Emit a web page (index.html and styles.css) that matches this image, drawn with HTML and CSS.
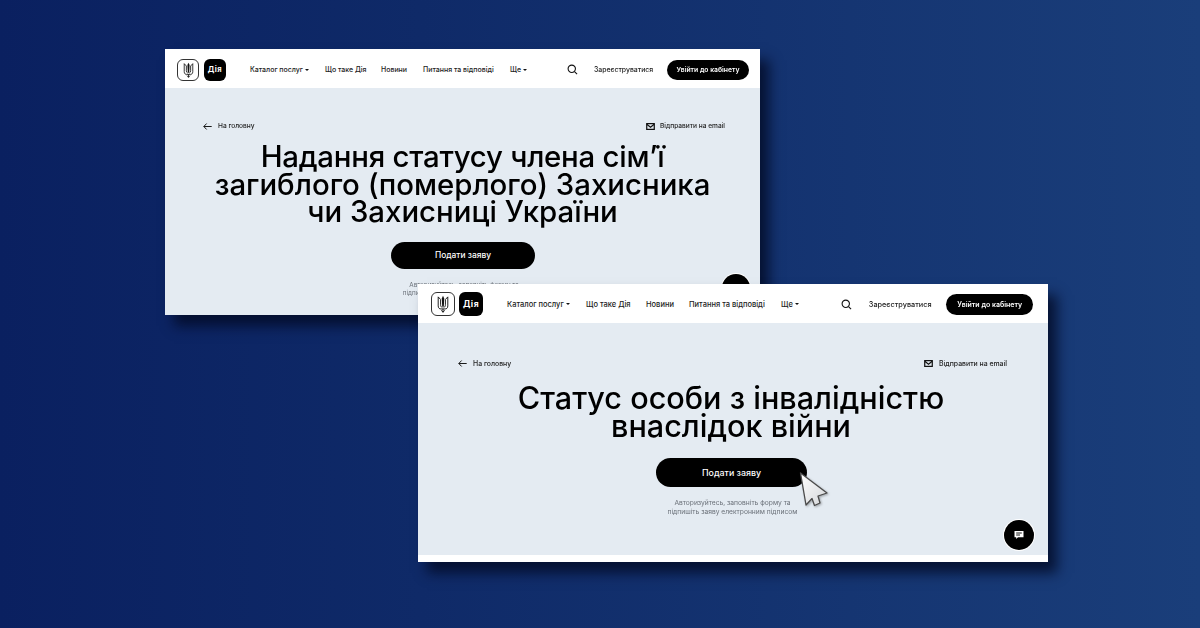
FILE: index.html
```html
<!DOCTYPE html>
<html lang="uk">
<head>
<meta charset="utf-8">
<title>Дія</title>
<link rel="stylesheet" href="styles.css">
</head>
<body>
<svg class="defs" width="0" height="0" aria-hidden="true">
  <symbol id="trident" viewBox="0 0 16 24">
    <path d="M8 1 L9.6 4.5 L9.1 14.5 L8 17 L6.9 14.5 L6.4 4.5 Z" fill="#111"/>
    <path d="M1.6 2.5 V14.5 C1.6 17.5 3.2 18.6 5.2 18.6 H10.8 C12.8 18.6 14.4 17.5 14.4 14.5 V2.5 L11.2 6 V13 C11.2 15 10.4 16 9 16.8 M1.6 2.5 L4.8 6 V13 C4.8 15 5.6 16 7 16.8 M8 18.6 V23 M5.8 20.4 L8 23 L10.2 20.4" fill="none" stroke="#111" stroke-width="1.25"/>
  </symbol>
</svg>

<section class="window window-a">
  <header class="topbar">
    <div class="logos">
      <span class="logo logo-gov"><svg class="trident"><use href="#trident"/></svg></span>
      <span class="logo logo-diia">Дія</span>
    </div>
    <nav class="nav">
      <a class="nav-catalog">Каталог послуг<i class="caret"></i></a>
      <a class="nav-what">Що таке Дія</a>
      <a class="nav-news">Новини</a>
      <a class="nav-faq">Питання та відповіді</a>
      <a class="nav-more">Ще<i class="caret"></i></a>
    </nav>
    <svg class="search" viewBox="0 0 12 12"><circle cx="5.2" cy="5.2" r="4" /><path d="M8.2 8.2 L11 11"/></svg>
    <a class="register">Зареєструватися</a>
    <a class="login">Увійти до кабінету</a>
  </header>
  <main class="content">
    <div class="toolbar">
      <a class="back"><svg class="arrow" viewBox="0 0 10 8"><path d="M4 .6 L.8 4 L4 7.4 M.8 4 H9.8"/></svg>На головну</a>
      <a class="mail"><svg class="envelope" viewBox="0 0 10 8"><rect x=".7" y=".7" width="8.6" height="6.6"/><path d="M.8 1.4 L5 4.8 L9.2 1.4"/></svg>Відправити на email</a>
    </div>
    <h1 class="title"><span class="title-tight">Надання статусу члена сім’ї</span><br>загиблого (померлого) Захисника<br>чи Захисниці України</h1>
    <a class="apply">Подати заяву</a>
    <p class="hint">Авторизуйтесь, заповніть форму та<br>підпишіть заяву електронним підписом</p>
  </main>
  <span class="chat"></span>
</section>

<section class="window window-b">
  <header class="topbar">
    <div class="logos">
      <span class="logo logo-gov"><svg class="trident"><use href="#trident"/></svg></span>
      <span class="logo logo-diia">Дія</span>
    </div>
    <nav class="nav">
      <a class="nav-catalog">Каталог послуг<i class="caret"></i></a>
      <a class="nav-what">Що таке Дія</a>
      <a class="nav-news">Новини</a>
      <a class="nav-faq">Питання та відповіді</a>
      <a class="nav-more">Ще<i class="caret"></i></a>
    </nav>
    <svg class="search" viewBox="0 0 12 12"><circle cx="5.2" cy="5.2" r="4" /><path d="M8.2 8.2 L11 11"/></svg>
    <a class="register">Зареєструватися</a>
    <a class="login">Увійти до кабінету</a>
  </header>
  <main class="content">
    <div class="toolbar">
      <a class="back"><svg class="arrow" viewBox="0 0 10 8"><path d="M4 .6 L.8 4 L4 7.4 M.8 4 H9.8"/></svg>На головну</a>
      <a class="mail"><svg class="envelope" viewBox="0 0 10 8"><rect x=".7" y=".7" width="8.6" height="6.6"/><path d="M.8 1.4 L5 4.8 L9.2 1.4"/></svg>Відправити на email</a>
    </div>
    <h1 class="title">Статус особи з інвалідністю<br>внаслідок війни</h1>
    <a class="apply">Подати заяву</a>
    <p class="hint">Авторизуйтесь, заповніть форму та<br>підпишіть заяву електронним підписом</p>
  </main>
  <div class="footer-strip"></div>
  <span class="chat"><svg class="chat-icon" viewBox="0 0 10 10"><path d="M.5 1 H9.5 V7.2 H4 L2.2 9 V7.2 H.5 Z" fill="#fff"/><path d="M2.2 3 H7.8 M2.2 5 H6" stroke="#000" stroke-width=".9"/></svg></span>
  <svg class="cursor" viewBox="0 0 32 38"><defs><linearGradient id="cursor-fill" x1="0" y1="0" x2="1" y2="1"><stop offset="0" stop-color="#fff"/><stop offset="1" stop-color="#d4d6d9"/></linearGradient></defs><path d="M2.5 3 L29 23 L20 26 L22 33 L16.5 35.5 L14 28.5 L8 35 Z" fill="url(#cursor-fill)" stroke="#4a4a4a" stroke-width="1.3" stroke-linejoin="round"/></svg>
</section>
</body>
</html>
```
FILE: styles.css
```css
* { box-sizing: border-box; }
html, body { margin: 0; height: 100%; }
body {
  position: relative;
  width: 1200px;
  height: 628px;
  overflow: hidden;
  background: linear-gradient(90deg, #0a2060 0%, #0f2a68 35%, #1a3e7a 100%);
  font-family: Inter, "Liberation Sans", sans-serif;
  color: #000;
}
.defs { position: absolute; }
a { color: inherit; text-decoration: none; white-space: nowrap; }

.window {
  position: absolute;
  overflow: hidden;
  background: #e4ebf2;
  box-shadow: 9px 11px 12px rgba(3, 10, 36, .8);
  filter: blur(.3px);
}
.window-a { left: 165px; top: 49px; width: 595px; height: 266px; --nav: 7px; }
.window-b { left: 418px; top: 284px; width: 630px; height: 278px; overflow: visible; --nav: 7.5px; }

.topbar {
  display: flex;
  align-items: center;
  background: #fff;
  height: 39px;
  font-size: var(--nav);
  font-weight: 500;
  color: #222;
}
.logos { display: flex; }
.logo {
  display: flex;
  align-items: center;
  justify-content: center;
  border-radius: 6px;
}
.logo-gov { border: 1px solid #333; background: #fff; }
.logo-diia { background: #000; color: #fff; font-weight: 700; font-family: Inter, sans-serif; letter-spacing: .5px; }
.trident { display: block; }
.nav { display: flex; }
.caret {
  display: inline-block;
  vertical-align: middle;
  margin-left: 2px;
  border: 2px solid transparent;
  border-top: 2.5px solid #111;
  border-bottom: 0;
}
.search { fill: none; stroke: #111; stroke-width: 1.2; flex: none; }
.login {
  display: flex;
  align-items: center;
  justify-content: center;
  background: #000;
  color: #fff;
  border-radius: 11px;
  font-weight: 600;
}
.toolbar { display: flex; justify-content: space-between; align-items: center; font-weight: 500; color: #222; }
.back, .mail { display: flex; align-items: center; }
.arrow { fill: none; stroke: #111; stroke-width: 1.1; }
.envelope { fill: none; stroke: #111; stroke-width: 1.4; }
.title { margin: 0; text-align: center; font-weight: 500; color: #000; }
.title-tight { letter-spacing: -.25px; }
.apply {
  display: flex;
  align-items: center;
  justify-content: center;
  background: #000;
  color: #fff;
  font-weight: 500;
  margin-left: auto;
  margin-right: auto;
}
.hint { margin: 0; text-align: center; color: #6a7078; }
.chat {
  position: absolute;
  display: flex;
  align-items: center;
  justify-content: center;
  border-radius: 50%;
  background: #000;
  box-shadow: 0 0 0 1px #fff;
}

/* Window A */
.window-a .topbar { padding: 2px 11px 0 12px; }
.window-a .logos { gap: 5px; }
.window-a .logo { width: 22px; height: 22px; }
.window-a .logo-diia { font-size: 7.5px; }
.window-a .trident { width: 11px; height: 16px; }
.window-a .nav { margin-left: 24px; width: 277px; }
.window-a .nav-catalog { width: 75px; }
.window-a .nav-what { width: 56px; }
.window-a .nav-news { width: 42px; }
.window-a .nav-faq { width: 87px; }
.window-a .search { width: 11px; height: 11px; margin-left: 40px; }
.window-a .register { margin-left: 16px; width: 60px; font-size: 6.9px; }
.window-a .login { width: 82px; height: 20px; margin-left: 13px; font-size: 6.8px; }
.window-a .content { padding: 33px 35px 0 38px; }
.window-a .toolbar { font-size: 6.6px; height: 10px; }
.window-a .back { gap: 6px; }
.window-a .mail { gap: 5px; }
.window-a .arrow { width: 9px; height: 7px; }
.window-a .envelope { width: 9px; height: 7px; }
.window-a .title { font-size: 29.4px; line-height: 27.5px; margin: 12px 0 16px -3px; }
.window-a .apply { width: 144px; height: 27px; border-radius: 14px; font-size: 8.4px; transform: translateX(-1px); }
.window-a .hint { font-size: 6.3px; line-height: 8px; margin-top: 12px; }
.window-a .chat { left: 557px; top: 225px; width: 28px; height: 28px; }

/* Window B */
.window-b .topbar { padding: 1px 15px 0 13px; }
.window-b .logos { gap: 4px; }
.window-b .logo { width: 24px; height: 24px; }
.window-b .logo-diia { font-size: 8.5px; }
.window-b .trident { width: 12px; height: 18px; }
.window-b .nav { margin-left: 24px; width: 292px; }
.window-b .nav-catalog { width: 79px; }
.window-b .nav-what { width: 60px; }
.window-b .nav-news { width: 43px; }
.window-b .nav-faq { width: 92px; }
.window-b .search { width: 11px; height: 11px; margin-left: 42px; }
.window-b .register { margin-left: 17px; width: 63px; font-size: 7.3px; }
.window-b .login { width: 87px; height: 21px; margin-left: 15px; font-size: 7px; }
.window-b .content { height: 232px; padding: 35px 41px 0 40px; }
.window-b .toolbar { font-size: 6.9px; height: 10px; }
.window-b .back { gap: 6px; }
.window-b .mail { gap: 6px; }
.window-b .arrow { width: 9px; height: 7px; }
.window-b .envelope { width: 9px; height: 7px; }
.window-b .title { font-size: 30.6px; line-height: 28px; margin: 16px 0 18px -3px; }
.window-b .apply { width: 151px; height: 29px; border-radius: 15px; font-size: 8.8px; transform: translateX(-1px); }
.window-b .hint { font-size: 6.7px; line-height: 8.5px; margin-top: 12px; }
.window-b .footer-strip { height: 7px; background: #fff; }
.window-b .chat { left: 586px; top: 236px; width: 30px; height: 30px; }
.chat-icon { width: 10px; height: 10px; }
.cursor {
  position: absolute;
  left: 380px;
  top: 186px;
  width: 32px;
  height: 38px;
  filter: drop-shadow(1px 1px 1px rgba(0,0,0,.3));
}
```
